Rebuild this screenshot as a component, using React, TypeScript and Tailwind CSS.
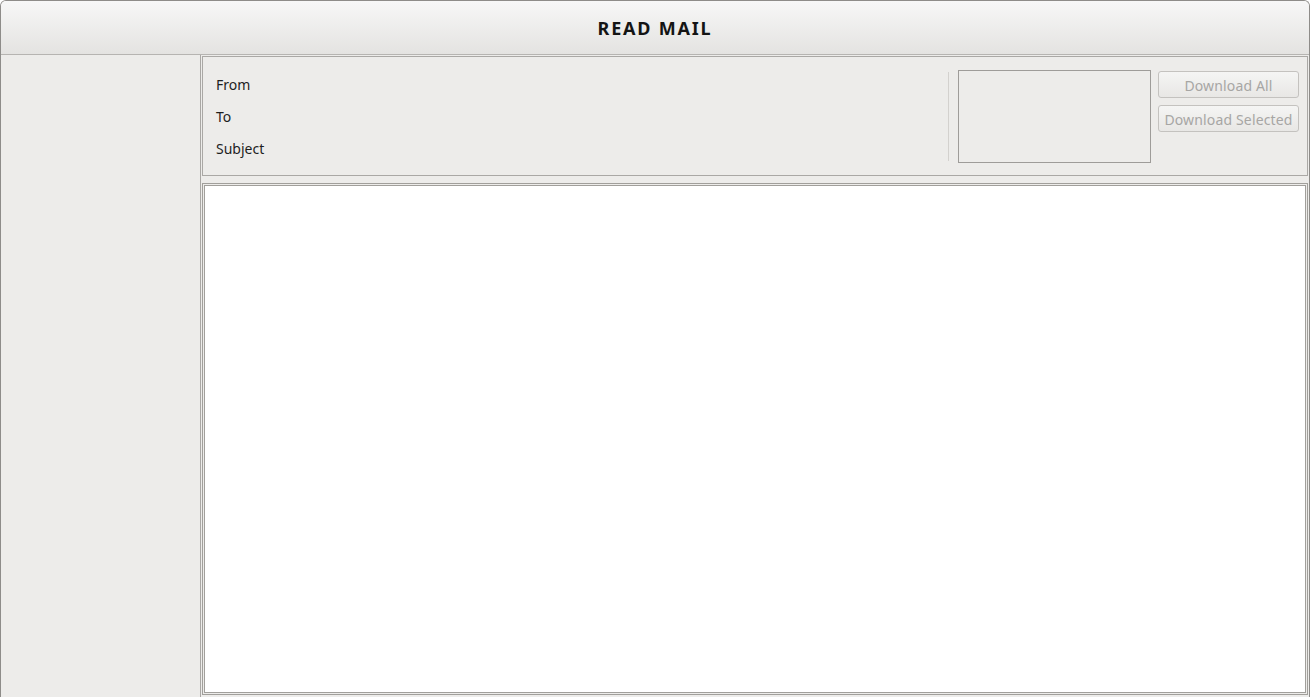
import React from "react";

export default function App() {
  return (
    <div className="w-[1310px] h-[697px] overflow-hidden bg-white font-['Noto_Sans',sans-serif]">
      <div className="h-full flex flex-col border border-b-0 border-[#8e8c89] rounded-t-[6px] overflow-hidden bg-[#edecea]">
        <div className="h-[54px] shrink-0 border-b border-[#b6b4b1] bg-gradient-to-b from-[#f7f7f7] to-[#e4e3e1] flex items-center justify-center">
          <span className="text-[18px] font-bold tracking-[1.8px] text-[#141414] leading-none">
            READ MAIL
          </span>
        </div>
        <div className="flex-1 min-h-0 flex">
          <div className="w-[200px] shrink-0 border-r border-[#a9a7a4] bg-[#edecea]" />
          <div className="flex-1 min-w-0 flex flex-col px-px pt-px pb-[2px] gap-[7px]">
            <div className="h-[120px] shrink-0 border border-[#aaa8a5] flex items-start pr-[8px]">
              <div className="flex-1 pl-[13px] pt-[11px] text-[14px] text-[#1e1e1e]">
                <div className="h-[32px] flex items-center">From</div>
                <div className="h-[32px] flex items-center">To</div>
                <div className="h-[32px] flex items-center">Subject</div>
              </div>
              <div className="w-px h-[89px] mt-[15px] bg-[#d3d1ce]" />
              <div className="ml-[9px] mt-[13px] w-[193px] h-[93px] border border-[#9e9c99] bg-[#edecea]" />
              <div className="ml-[7px] mt-[14px] flex flex-col gap-[7px]">
                <button className="w-[141px] h-[27px] rounded-[3px] border border-[#c4c2bf] bg-gradient-to-b from-[#f5f5f4] to-[#e8e7e5] text-[14px] tracking-[0.15px] text-[#a7a6a4] flex items-center justify-center leading-none pt-[2px]">
                  Download All
                </button>
                <button className="w-[141px] h-[27px] rounded-[3px] border border-[#c4c2bf] bg-gradient-to-b from-[#f5f5f4] to-[#e8e7e5] text-[14px] tracking-[0.15px] text-[#a7a6a4] flex items-center justify-center leading-none pt-[2px]">
                  Download Selected
                </button>
              </div>
            </div>
            <div className="flex-1 min-h-0 border border-[#a19f9b] p-px">
              <div className="h-full bg-white border border-[#a19f9b]" />
            </div>
          </div>
        </div>
      </div>
    </div>
  );
}
